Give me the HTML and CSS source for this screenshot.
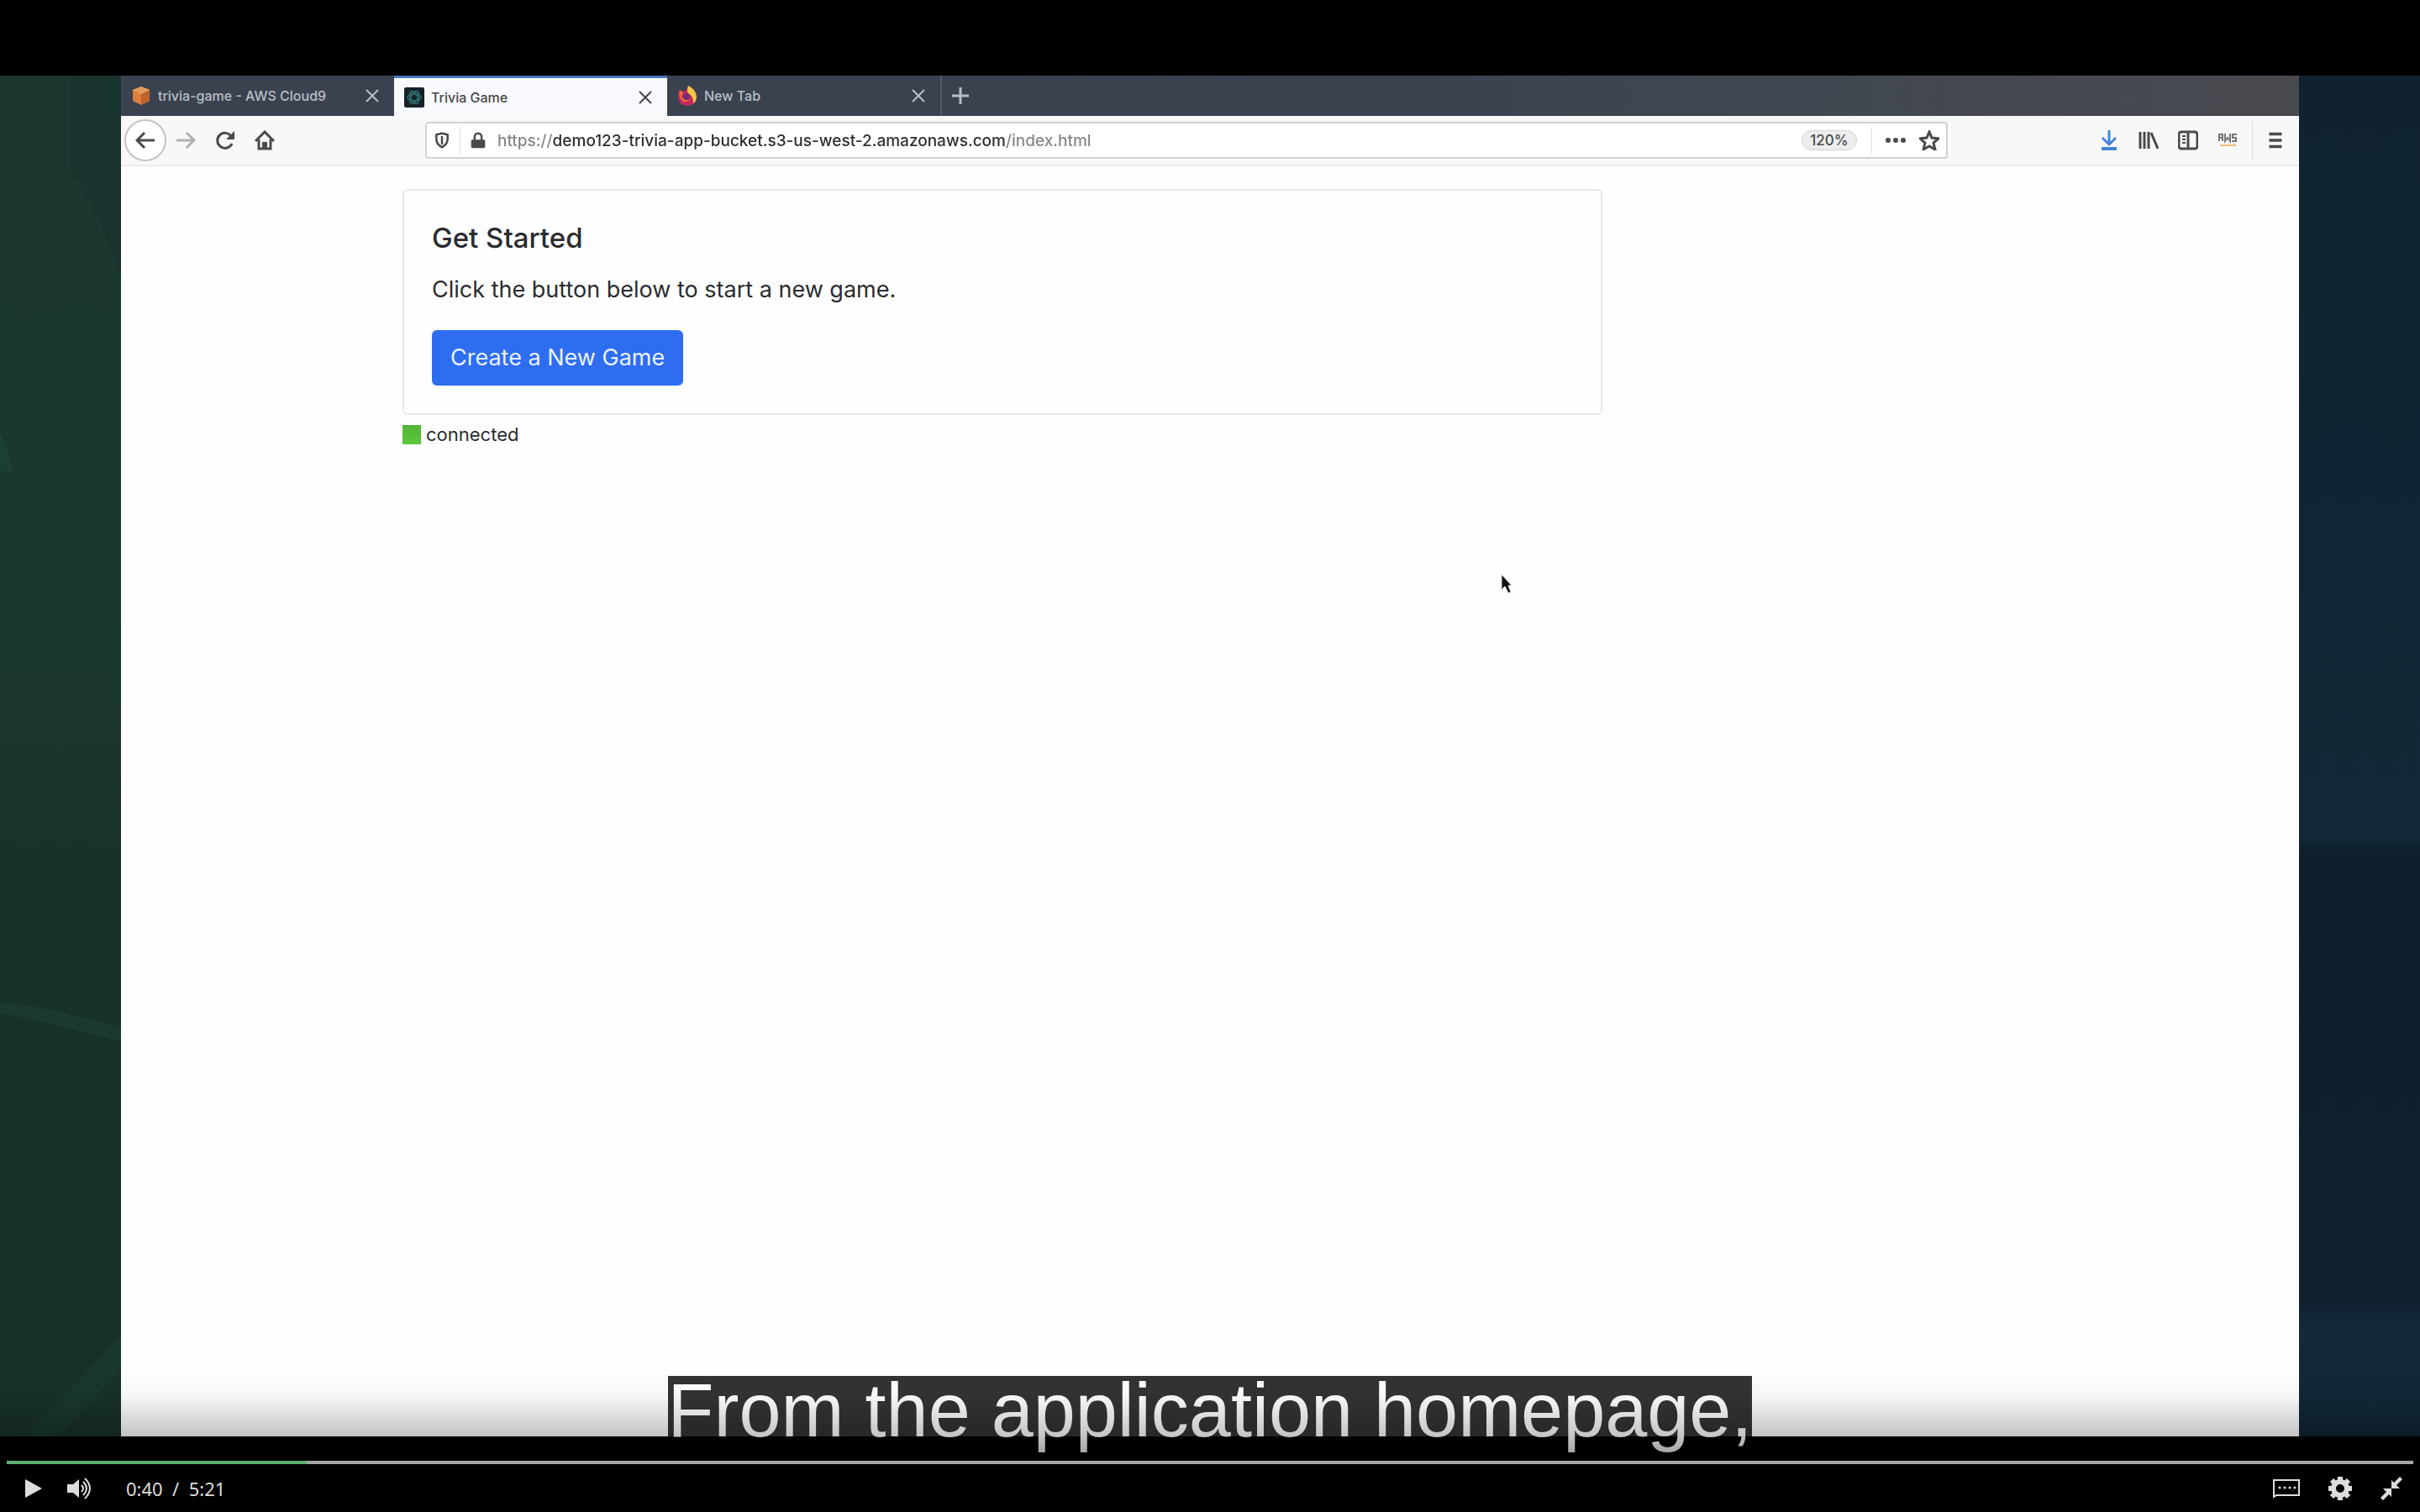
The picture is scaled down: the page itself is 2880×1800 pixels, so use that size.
FILE: index.html
```html
<!DOCTYPE html>
<html lang="en">
<head>
<meta charset="utf-8">
<meta name="viewport" content="width=device-width, initial-scale=1">
<title>Trivia Game video</title>
<link rel="stylesheet" href="styles.css">
</head>
<body>
<main class="player">
  <div class="stage">
    <svg class="backdrop" viewBox="0 0 2880 1620" preserveAspectRatio="none" aria-hidden="true">
      <defs>
        <linearGradient id="green" x1="0" y1="0" x2="0" y2="1">
          <stop offset="0" stop-color="#1b362f"/><stop offset=".35" stop-color="#1a382f"/>
          <stop offset=".6" stop-color="#18322a"/><stop offset="1" stop-color="#173128"/>
        </linearGradient>
        <linearGradient id="blue" x1="0" y1="0" x2="0" y2="1">
          <stop offset="0" stop-color="#10222f"/><stop offset=".3" stop-color="#102533"/>
          <stop offset=".56" stop-color="#112936"/><stop offset=".57" stop-color="#0e202c"/>
          <stop offset=".9" stop-color="#10202f"/><stop offset=".92" stop-color="#122a3a"/>
          <stop offset="1" stop-color="#112634"/>
        </linearGradient>
      </defs>
      <rect width="1440" height="1620" fill="url(#green)"/>
      <rect x="1440" width="1440" height="1620" fill="url(#blue)"/>
      <path d="M84 0h60v240q-30-90-60-130z" fill="#19332e"/>
      <path d="M0 425q10 15 15 48L0 470z" fill="#1d3e33"/>
      <path d="M0 1104q60 4 144 30v16Q70 1130 0 1116z" fill="#1a392f"/>
      <path d="M144 1500v40L70 1620H30z" fill="#19372d"/>
    </svg>

    <section class="browser" aria-label="Web browser">
      <div class="tabs" role="tablist">
        <div class="tab" role="tab">
          <svg class="favicon" viewBox="0 0 24 24"><path d="M12 1l10 4v13l-10 5-10-5V5z" fill="#dc7f3e"/><path d="M12 10l10-5v13l-10 5z" fill="#bd622b"/><path d="M12 1l10 4-10 5L2 5z" fill="#e59a5d"/></svg>
          <span class="tab-title">trivia-game - AWS Cloud9</span>
          <button class="tab-close" aria-label="Close tab"><svg viewBox="0 0 16 16"><path d="M1 1l14 14M15 1L1 15"/></svg></button>
        </div>
        <div class="tab tab-active" role="tab" aria-selected="true">
          <svg class="favicon" viewBox="0 0 24 24"><rect width="24" height="24" rx="2" fill="#172128"/><g fill="none" stroke="#2c6666" stroke-width="2"><ellipse cx="12" cy="12" rx="8" ry="4"/><ellipse cx="12" cy="12" rx="8" ry="4" transform="rotate(60 12 12)"/><ellipse cx="12" cy="12" rx="8" ry="4" transform="rotate(120 12 12)"/></g></svg>
          <span class="tab-title">Trivia Game</span>
          <button class="tab-close" aria-label="Close tab"><svg viewBox="0 0 16 16"><path d="M1 1l14 14M15 1L1 15"/></svg></button>
        </div>
        <div class="tab" role="tab">
          <svg class="favicon" viewBox="0 0 24 24"><path d="M3 5l4 3q2-3 4-3l2-5q9 4 10 13 0 10-11 11Q1 23 1 13 1 8 3 5z" fill="#c62a5c"/><path d="M13 0q9 4 10 13 0 5-4 8 1-8-6-12-2-3 0-9z" fill="#f3c646"/><path d="M3 5l4 3-2 5q4 5 10 3-4 6-10 1-4-5-2-12z" fill="#ec6a3a"/><circle cx="11" cy="13" r="4" fill="#742c78"/></svg>
          <span class="tab-title">New Tab</span>
          <button class="tab-close" aria-label="Close tab"><svg viewBox="0 0 16 16"><path d="M1 1l14 14M15 1L1 15"/></svg></button>
        </div>
        <button class="tab-new" aria-label="Open a new tab"><svg viewBox="0 0 20 20"><path d="M10 0v20M0 10h20"/></svg></button>
      </div>

      <div class="toolbar">
        <div class="nav">
          <button class="back" aria-label="Back"><svg viewBox="0 0 24 24"><path d="M23 12H2M11 3l-9 9 9 9"/></svg></button>
          <button class="tool faded" aria-label="Forward"><svg viewBox="0 0 24 24"><path d="M1 12h21M13 3l9 9-9 9"/></svg></button>
          <button class="tool" aria-label="Reload"><svg viewBox="0 0 24 24"><path d="M20 16a9 9 0 1 1-1-9"/><path d="M23 1v10H13z" fill="currentColor" stroke="none"/></svg></button>
          <button class="tool" aria-label="Home"><svg viewBox="0 0 24 24"><path d="M1 13L12 2l11 11M5 11v11h14V11"/><path d="M9 22v-8h6v8z" fill="currentColor" stroke="none"/></svg></button>
        </div>
        <div class="address">
          <button class="tool shield" aria-label="Tracking protection"><svg viewBox="0 0 24 24"><path d="M12 2l8 2v6q0 8-8 12-8-4-8-12V4z"/><path d="M12 6v12"/></svg></button>
          <span class="divider"></span>
          <button class="tool lock" aria-label="Secure connection"><svg viewBox="0 0 24 24"><path d="M7 12V7a5 5 0 0 1 10 0v5"/><rect x="2" y="11" width="20" height="12" rx="2" fill="currentColor" stroke="none"/></svg></button>
          <input class="url" type="text" aria-label="Address" value="https://demo123-trivia-app-bucket.s3-us-west-2.amazonaws.com/index.html">
          <button class="zoom">120%</button>
          <span class="divider"></span>
          <button class="tool dots" aria-label="Page actions"><svg viewBox="0 0 24 24"><g fill="currentColor" stroke="none"><circle cx="3" cy="12" r="3"/><circle cx="12" cy="12" r="3"/><circle cx="21" cy="12" r="3"/></g></svg></button>
          <button class="tool" aria-label="Bookmark"><svg viewBox="0 0 24 24"><path d="M12 2l3 7 8 1-6 5 2 8-7-4-7 4 2-8-6-5 8-1z"/></svg></button>
        </div>
        <div class="extras">
          <button class="tool download" aria-label="Downloads"><svg viewBox="0 0 24 24"><path d="M12 0v15M4 9l8 8 8-8"/><path d="M3 22h18" stroke-width="4"/></svg></button>
          <button class="tool" aria-label="Library"><svg viewBox="0 0 24 24"><path d="M2 2v20M7 2v20M12 2v20M15 3l8 19"/></svg></button>
          <button class="tool" aria-label="Sidebars"><svg viewBox="0 0 24 24"><rect x="1" y="2" width="22" height="20" rx="3"/><path d="M12 2v20"/><path d="M5 7h4M5 11h4M5 15h4" stroke-width="2"/></svg></button>
          <button class="tool aws" aria-label="AWS"><svg viewBox="0 0 24 24"><path d="M2 13V5h4v8M2 9h4M9 4v9l3-4 3 4V4M23 5h-5v4h4v4h-5" stroke-width="2"/><path d="M3 18h18l-1-2" stroke="#f2bd78" stroke-width="2"/></svg></button>
          <span class="divider"></span>
          <button class="tool menu" aria-label="Menu"><svg viewBox="0 0 24 24"><path d="M3 3h18M3 12h18M3 21h18" stroke-width="4"/></svg></button>
        </div>
      </div>

      <div class="page">
        <section class="card">
          <h1 class="card-title">Get Started</h1>
          <p class="card-text">Click the button below to start a new game.</p>
          <button class="create">Create a New Game</button>
        </section>
        <p class="status"><span class="status-light"></span>connected</p>
      </div>
    </section>

    <svg class="cursor" viewBox="0 0 14 24" aria-hidden="true"><path d="M1 1v18l4-4 4 8 3-1-3-8h4z" fill="#111" stroke="#ddd"/></svg>
  </div>

  <p class="caption"><span class="caption-text">From the application homepage,</span></p>
  <div class="shade"></div>

  <div class="controls">
    <input class="seek" type="range" min="0" max="321" value="40" aria-label="Seek">
    <div class="buttons">
      <button class="control" aria-label="Play"><svg class="play-icon" viewBox="0 0 20 24"><path d="M0 1v22l20-11z"/></svg></button>
      <button class="control" aria-label="Volume"><svg class="volume-icon" viewBox="0 0 32 26"><path d="M0 8h7l7-6v22l-7-6H0z"/><g fill="none" stroke="#ddd" stroke-width="2"><path d="M17 9q4 4 0 8M19 5q8 8 0 16M21 1q12 12 0 24"/></g></svg></button>
      <span class="time">0:40&nbsp; /&nbsp; 5:21</span>
      <div class="options">
        <button class="control" aria-label="Captions"><svg class="cc-icon" viewBox="0 0 32 24"><path d="M1 22V2h30v18H4z" fill="none" stroke="#ddd" stroke-width="2"/><circle cx="8" cy="11" r="1.5"/><circle cx="14" cy="11" r="1.5"/><circle cx="20" cy="11" r="1.5"/><circle cx="26" cy="11" r="1.5"/></svg></button>
        <button class="control" aria-label="Settings"><svg class="gear-icon" viewBox="0 0 28 28"><g stroke="#ddd" stroke-width="6"><path d="M14 0v7M14 21v7M0 14h7M21 14h7M4 4l5 5M19 19l5 5M4 24l5-5M19 9l5-5"/></g><circle cx="14" cy="14" r="8" fill="none" stroke="#ddd" stroke-width="6"/></svg></button>
        <button class="control" aria-label="Exit full screen"><svg class="shrink-icon" viewBox="0 0 26 28"><path d="M13 4v10h10l-4-4 7-7-3-3-7 7zM13 24V14H3l4 4-7 7 3 3 7-7z"/></svg></button>
      </div>
    </div>
  </div>
</main>
</body>
</html>
```
FILE: styles.css
```css
* { box-sizing: border-box; }

body {
  margin: 0;
  background: #000;
  font-family: Inter, "Liberation Sans", sans-serif;
}

button {
  padding: 0;
  border: 0;
  background: none;
  color: inherit;
  font: inherit;
}

svg { display: block; }

/* Full-window player with the film centred between black bars */
.player {
  position: relative;
  display: flex;
  align-items: center;
  min-height: 100vh;
  overflow: hidden;
}

.stage {
  position: relative;
  display: flex;
  width: 100%;
  aspect-ratio: 16 / 9;
  padding: 0 5%;
}

.backdrop {
  position: absolute;
  inset: 0;
  width: 100%;
  height: 100%;
}

/* Recorded browser window */
.browser {
  position: relative;
  display: flex;
  flex: 1;
  flex-direction: column;
  min-width: 0;
  background: #fefefe;
}

.tabs {
  display: flex;
  height: 48px;
  background: linear-gradient(90deg, #3a424f, #3a4250 60%, #404750 75%, #48494f);
  color: #b9bec6;
}

.tab {
  display: flex;
  align-items: center;
  gap: 8px;
  width: 325px;
  padding: 0 18px 0 12px;
}

.tab-active {
  border-top: 3px solid #4a72b8;
  background: #f8f9fc;
  color: #45474b;
}

.favicon {
  width: 24px;
  height: 24px;
}

.tab-title {
  flex: 1;
  font-size: 16px;
  font-weight: 500;
  white-space: nowrap;
}

.tab-close svg,
.tab-new svg {
  width: 16px;
  height: 16px;
  fill: none;
  stroke: currentColor;
  stroke-width: 2;
}

.tab-new {
  padding: 0 12px;
  border-left: 2px solid #515966;
}

.tab-new svg {
  width: 20px;
  height: 20px;
  stroke-width: 3;
}

.toolbar {
  display: flex;
  align-items: center;
  height: 60px;
  border-bottom: 2px solid #ececec;
  background: #f8f8f8;
  color: #4a4a4a;
}

.nav {
  display: flex;
  align-items: center;
  gap: 23px;
  width: 362px;
  padding-left: 4px;
}

.back {
  display: grid;
  place-items: center;
  width: 50px;
  height: 50px;
  margin-right: -12px;
  border: 2px solid #c4c4c4;
  border-radius: 50%;
  background: #fff;
}

.back svg,
.tool svg {
  width: 24px;
  height: 24px;
  fill: none;
  stroke: currentColor;
  stroke-width: 3;
}

.faded { color: #b0b0b0; }
.download { color: #4585d8; }
.aws { color: #777; }

.shield svg,
.lock svg,
.menu svg {
  width: 20px;
}

.address {
  display: flex;
  flex: 1;
  align-items: center;
  gap: 11px;
  height: 44px;
  padding: 0 8px;
  border: 2px solid #d2d2d2;
  border-radius: 4px;
  background: #fff;
}

.divider {
  width: 1px;
  height: 32px;
  background: #dedede;
}

/* The host part of the address is darker than its scheme and path */
.url {
  flex: 1;
  min-width: 0;
  padding: 2px 0 0 2px;
  border: 0;
  background: linear-gradient(90deg, #858585 68px, #2c2c2c 68px, #2c2c2c 608px, #858585 608px);
  -webkit-background-clip: text;
  background-clip: text;
  color: transparent;
  font: 500 19px/28px Inter, "Liberation Sans", sans-serif;
}

.zoom {
  width: 66px;
  height: 24px;
  margin-right: 6px;
  border: 1px solid #d4d4d4;
  border-radius: 12px;
  background: #ededed;
  font-size: 17px;
  font-weight: 500;
  line-height: 22px;
}

.dots { margin: 0 5px; }

.extras {
  display: flex;
  align-items: center;
  justify-content: flex-end;
  gap: 23px;
  width: 418px;
  padding-right: 18px;
}

.extras .divider {
  height: 46px;
  margin: 0 -6px;
}

/* Trivia page */
.page {
  padding: 27px 0 0 335px;
  color: #2a2c2f;
}

.card {
  max-width: 1428px;
  padding: 35px 33px 33px;
  border: 2px solid #e8e8e8;
  border-radius: 6px;
}

.card-title {
  margin: 0 0 20px;
  font-size: 33px;
  font-weight: 500;
  line-height: 42px;
}

.card-text {
  margin: 0 0 27px;
  font-size: 27px;
  line-height: 42px;
}

.create {
  height: 66px;
  padding: 0 22px;
  border-radius: 6px;
  background: #2f6df0;
  color: #e8f2ff;
  font-size: 27px;
  line-height: 42px;
}

.status {
  display: flex;
  align-items: center;
  gap: 6px;
  margin: 7px 0 0;
  font-size: 22px;
  line-height: 32px;
}

.status-light {
  width: 22px;
  height: 23px;
  background: linear-gradient(#51b436, #5cc83c);
}

.cursor {
  position: absolute;
  top: 36.6%;
  left: 62%;
  width: 14px;
  height: 24px;
}

/* Subtitle over the film */
.caption {
  position: absolute;
  right: 0;
  bottom: 80px;
  left: 0;
  margin: 0;
  text-align: center;
}

.caption-text {
  display: block;
  width: fit-content;
  margin: 0 auto;
  background: rgba(0, 0, 0, 0.8);
  color: #fff;
  font: 90px/82px "Liberation Sans", Arial, sans-serif;
  white-space: nowrap;
}

.shade {
  position: absolute;
  right: 0;
  bottom: 0;
  left: 0;
  height: 170px;
  background: linear-gradient(transparent, rgba(0, 0, 0, 0.03) 32px, rgba(0, 0, 0, 0.23) 80px, rgba(0, 0, 0, 0.35) 98px, rgba(0, 0, 0, 0.7));
}

/* Player controls */
.controls {
  position: absolute;
  right: 0;
  bottom: 0;
  left: 0;
  padding: 0 8px;
}

.seek {
  display: block;
  width: 100%;
  height: 4px;
  margin: 0;
  appearance: none;
  background: linear-gradient(90deg, #5cae74 12.46%, #a6a6a6 12.46%);
}

.seek::-webkit-slider-thumb {
  width: 1px;
  height: 4px;
  appearance: none;
  background: transparent;
}

.buttons {
  display: flex;
  align-items: center;
  gap: 30px;
  height: 57px;
  padding: 0 13px 0 22px;
  color: #ddd;
}

.options {
  display: flex;
  align-items: center;
  gap: 34px;
  margin-left: auto;
}

.control svg { fill: #ddd; }

.play-icon {
  width: 20px;
  height: 24px;
}

.volume-icon {
  width: 32px;
  height: 26px;
}

.time {
  margin-left: 8px;
  font-family: "Noto Sans", sans-serif;
  font-size: 22px;
  line-height: 32px;
}

.cc-icon {
  width: 32px;
  height: 24px;
}

.gear-icon {
  width: 28px;
  height: 28px;
}

.shrink-icon {
  width: 26px;
  height: 28px;
}
```
